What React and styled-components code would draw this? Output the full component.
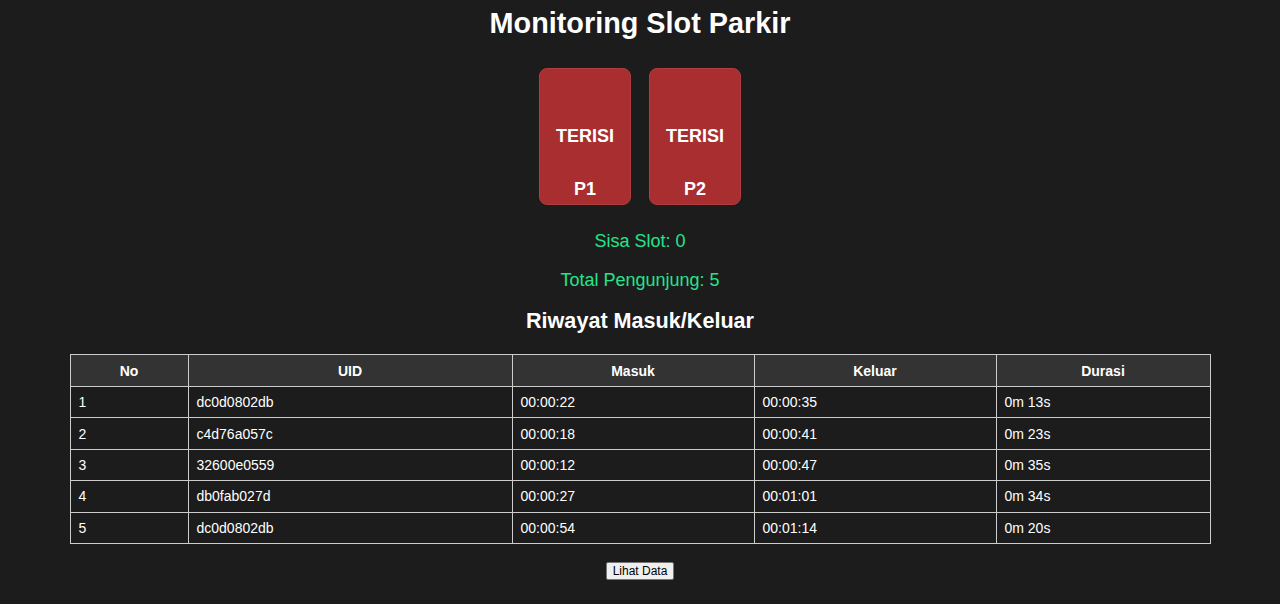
import React from "react";
import styled, { createGlobalStyle } from "styled-components";

const GlobalStyle = createGlobalStyle`
  body {
    margin: 0;
    background: #1c1c1c;
    color: #ffffff;
    font-family: "Liberation Sans", Arial, sans-serif;
  }
`;

const Page = styled.div`
  display: flex;
  flex-direction: column;
  align-items: center;
  padding: 4px 0 24px;
`;

const Title = styled.h1`
  font-size: 28.8px;
  font-weight: bold;
  margin: 0;
  line-height: 38px;
`;

const SlotRow = styled.div`
  display: flex;
  gap: 18px;
  margin-top: 26px;
`;

const Slot = styled.div`
  width: 92px;
  height: 137px;
  box-sizing: border-box;
  border-radius: 8px;
  background: ${(p) => (p.filled ? "#a82e30" : "#2e8b57")};
  border: 1px solid ${(p) => (p.filled ? "#b03c3e" : "#3fa56b")};
  display: flex;
  flex-direction: column;
  align-items: center;
  font-size: 18px;
  font-weight: bold;
  padding-top: 57px;
`;

const SlotStatus = styled.div`
  line-height: 20px;
`;

const SlotName = styled.div`
  margin-top: 33px;
  line-height: 20px;
`;

const Info = styled.p`
  color: #24e48b;
  font-size: 18px;
  margin: 0;
  line-height: 22px;
  margin-top: ${(p) => p.top}px;
`;

const SubTitle = styled.h2`
  font-size: 21.6px;
  font-weight: bold;
  margin: 17px 0 0;
  line-height: 26px;
`;

const Table = styled.table`
  width: 1140px;
  table-layout: fixed;
  border-collapse: collapse;
  margin-top: 20px;
  font-size: 14px;
`;

const Th = styled.th`
  box-sizing: border-box;
  background: #333333;
  border: 1px solid #cccccc;
  height: 32px;
  padding: 1px 8px 0;
  font-weight: bold;
  text-align: center;
  width: ${(p) => p.w}px;
`;

const Td = styled.td`
  border: 1px solid #cccccc;
  height: 30.4px;
  padding: 0 8px;
  text-align: left;
`;

const Button = styled.button`
  margin-top: 18px;
  font-family: "Liberation Sans", Arial, sans-serif;
  font-size: 12px;
  line-height: 14px;
  padding: 1px 6px;
  background: #efefef;
  color: #000;
  border: 1px solid #767676;
  border-radius: 2px;
`;

const rows = [
  ["1", "dc0d0802db", "00:00:22", "00:00:35", "0m 13s"],
  ["2", "c4d76a057c", "00:00:18", "00:00:41", "0m 23s"],
  ["3", "32600e0559", "00:00:12", "00:00:47", "0m 35s"],
  ["4", "db0fab027d", "00:00:27", "00:01:01", "0m 34s"],
  ["5", "dc0d0802db", "00:00:54", "00:01:14", "0m 20s"],
];

const columns = [
  ["No", 118],
  ["UID", 324],
  ["Masuk", 242],
  ["Keluar", 242],
  ["Durasi", 214],
];

export default function App() {
  return (
    <>
      <GlobalStyle />
      <Page>
        <Title>Monitoring Slot Parkir</Title>
        <SlotRow>
          <Slot filled>
            <SlotStatus>TERISI</SlotStatus>
            <SlotName>P1</SlotName>
          </Slot>
          <Slot filled>
            <SlotStatus>TERISI</SlotStatus>
            <SlotName>P2</SlotName>
          </Slot>
        </SlotRow>
        <Info top={25}>Sisa Slot: 0</Info>
        <Info top={17}>Total Pengunjung: 5</Info>
        <SubTitle>Riwayat Masuk/Keluar</SubTitle>
        <Table>
          <thead>
            <tr>
              {columns.map(([name, w]) => (
                <Th key={name} w={w}>
                  {name}
                </Th>
              ))}
            </tr>
          </thead>
          <tbody>
            {rows.map((r) => (
              <tr key={r[0]}>
                {r.map((c, i) => (
                  <Td key={i}>{c}</Td>
                ))}
              </tr>
            ))}
          </tbody>
        </Table>
        <Button>Lihat Data</Button>
      </Page>
    </>
  );
}
